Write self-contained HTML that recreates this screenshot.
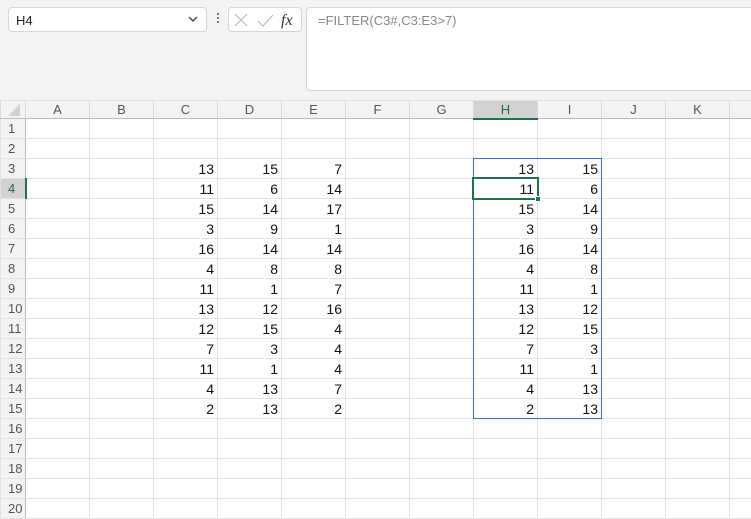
<!DOCTYPE html>
<html><head><meta charset="utf-8"><style>
*{margin:0;padding:0;box-sizing:border-box}
body{width:751px;height:512px;overflow:hidden;background:#f3f3f3;font-family:"Liberation Sans",sans-serif;position:relative}
.nb{position:absolute;left:8px;top:7px;width:199px;height:25px;background:#fff;border:1px solid #d6d6d6;border-radius:4px;font-size:13px;padding:5px 0 0 7px;color:#222}
.fxb{position:absolute;left:228px;top:7px;width:74px;height:25px;background:#fff;border:1px solid #d6d6d6;border-radius:4px}
.fb{position:absolute;left:306px;top:7px;width:450px;height:84px;background:#fff;border:1px solid #d6d6d6;border-radius:4px;font-size:13px;color:#888;padding:5px 0 0 11px}
table{position:absolute;left:0;top:100px;width:793px;border-collapse:collapse;table-layout:fixed;background:#fff}
td{height:20px;border:1px solid #e2e2e2;font-size:14px;text-align:right;padding:0 3px 0 0;color:#111;overflow:hidden;white-space:nowrap}
tr.h td{height:18px;background:#f3f3f3;color:#555;text-align:center;font-size:13px;padding:0;border-color:#e2e2e2 #dadada #bdbdbd}
td.r{background:#f3f3f3;color:#555;text-align:left;padding-left:7px;font-size:13px;border-right:1px solid #bdbdbd}
</style></head><body>
<div class="nb">H4</div>
<svg style="position:absolute;left:187px;top:14px" width="12" height="10"><path d="M2 3 L6 7 L10 3" stroke="#444" stroke-width="1.4" fill="none"/></svg>
<div style="position:absolute;left:217px;top:13px;width:2px;height:2px;background:#777;box-shadow:0 4px 0 #777,0 8px 0 #777"></div>
<div class="fxb"></div>
<svg style="position:absolute;left:232px;top:11px" width="70" height="18"><path d="M3 3 L15 15 M15 3 L3 15" stroke="#bbb" stroke-width="1.2"/><path d="M26 10 L31 15 L41 4" stroke="#bbb" stroke-width="1.2" fill="none"/><text x="49" y="14" font-family="Liberation Serif" font-style="italic" font-size="16" fill="#333">fx</text></svg>
<div class="fb">=FILTER(C3#,C3:E3&gt;7)</div>
<table>
<colgroup><col style="width:25px"><col style="width:64px"><col style="width:64px"><col style="width:64px"><col style="width:64px"><col style="width:64px"><col style="width:64px"><col style="width:64px"><col style="width:64px"><col style="width:64px"><col style="width:64px"><col style="width:64px"><col style="width:64px"></colgroup>
<tr class="h"><td></td><td>A</td><td>B</td><td>C</td><td>D</td><td>E</td><td>F</td><td>G</td><td style="background:#d2d2d2;color:#1e6b40;border-bottom:2px solid #217346">H</td><td>I</td><td>J</td><td>K</td><td>L</td></tr>
<tr><td class="r">1</td><td></td><td></td><td></td><td></td><td></td><td></td><td></td><td></td><td></td><td></td><td></td><td></td></tr>
<tr><td class="r">2</td><td></td><td></td><td></td><td></td><td></td><td></td><td></td><td></td><td></td><td></td><td></td><td></td></tr>
<tr><td class="r">3</td><td></td><td></td><td>13</td><td>15</td><td>7</td><td></td><td></td><td>13</td><td>15</td><td></td><td></td><td></td></tr>
<tr><td class="r" style="background:#d2d2d2;color:#1e6b40;border-right:2px solid #217346">4</td><td></td><td></td><td>11</td><td>6</td><td>14</td><td></td><td></td><td>11</td><td>6</td><td></td><td></td><td></td></tr>
<tr><td class="r">5</td><td></td><td></td><td>15</td><td>14</td><td>17</td><td></td><td></td><td>15</td><td>14</td><td></td><td></td><td></td></tr>
<tr><td class="r">6</td><td></td><td></td><td>3</td><td>9</td><td>1</td><td></td><td></td><td>3</td><td>9</td><td></td><td></td><td></td></tr>
<tr><td class="r">7</td><td></td><td></td><td>16</td><td>14</td><td>14</td><td></td><td></td><td>16</td><td>14</td><td></td><td></td><td></td></tr>
<tr><td class="r">8</td><td></td><td></td><td>4</td><td>8</td><td>8</td><td></td><td></td><td>4</td><td>8</td><td></td><td></td><td></td></tr>
<tr><td class="r">9</td><td></td><td></td><td>11</td><td>1</td><td>7</td><td></td><td></td><td>11</td><td>1</td><td></td><td></td><td></td></tr>
<tr><td class="r">10</td><td></td><td></td><td>13</td><td>12</td><td>16</td><td></td><td></td><td>13</td><td>12</td><td></td><td></td><td></td></tr>
<tr><td class="r">11</td><td></td><td></td><td>12</td><td>15</td><td>4</td><td></td><td></td><td>12</td><td>15</td><td></td><td></td><td></td></tr>
<tr><td class="r">12</td><td></td><td></td><td>7</td><td>3</td><td>4</td><td></td><td></td><td>7</td><td>3</td><td></td><td></td><td></td></tr>
<tr><td class="r">13</td><td></td><td></td><td>11</td><td>1</td><td>4</td><td></td><td></td><td>11</td><td>1</td><td></td><td></td><td></td></tr>
<tr><td class="r">14</td><td></td><td></td><td>4</td><td>13</td><td>7</td><td></td><td></td><td>4</td><td>13</td><td></td><td></td><td></td></tr>
<tr><td class="r">15</td><td></td><td></td><td>2</td><td>13</td><td>2</td><td></td><td></td><td>2</td><td>13</td><td></td><td></td><td></td></tr>
<tr><td class="r">16</td><td></td><td></td><td></td><td></td><td></td><td></td><td></td><td></td><td></td><td></td><td></td><td></td></tr>
<tr><td class="r">17</td><td></td><td></td><td></td><td></td><td></td><td></td><td></td><td></td><td></td><td></td><td></td><td></td></tr>
<tr><td class="r">18</td><td></td><td></td><td></td><td></td><td></td><td></td><td></td><td></td><td></td><td></td><td></td><td></td></tr>
<tr><td class="r">19</td><td></td><td></td><td></td><td></td><td></td><td></td><td></td><td></td><td></td><td></td><td></td><td></td></tr>
<tr><td class="r">20</td><td></td><td></td><td></td><td></td><td></td><td></td><td></td><td></td><td></td><td></td><td></td><td></td></tr>
</table>
<svg style="position:absolute;left:0;top:100px" width="25" height="18"><path d="M20 4 L20 16 L8 16 Z" fill="#d0d0d0"/></svg>
<div style="position:absolute;left:473px;top:158px;width:129px;height:261px;border:1px solid #3f6fb5"></div>
<div style="position:absolute;left:472px;top:177px;width:67px;height:23px;border:2px solid #217346"></div>
<div style="position:absolute;left:535px;top:196px;width:6px;height:6px;background:#217346;border:1px solid #fff"></div>
</body></html>
